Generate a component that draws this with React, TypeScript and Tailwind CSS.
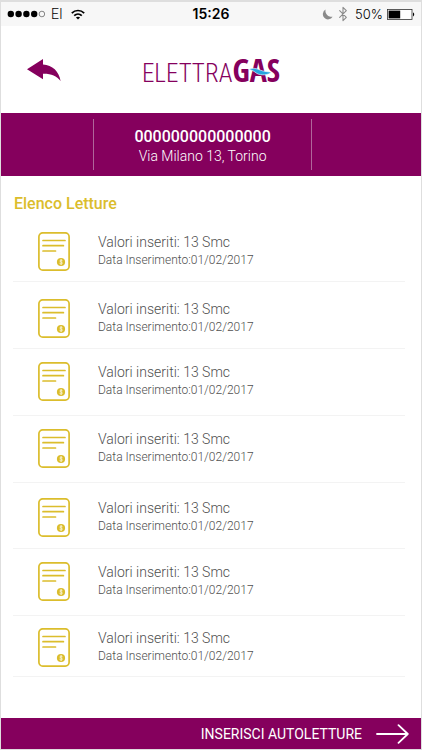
import { LuBluetooth } from "react-icons/lu";

type Spacing = "low" | "mid" | "high" | "last";

const spacingClass: Record<Spacing, string> = {
  low: "pt-[17px] pb-2.5",
  mid: "pt-[15px] pb-[11px]",
  high: "pt-[13px] pb-3.5",
  last: "pt-3 pb-[9px]",
};

const readings: { id: number; value: string; date: string; spacing: Spacing }[] = [
  { id: 1, value: "13 Smc", date: "01/02/2017", spacing: "low" },
  { id: 2, value: "13 Smc", date: "01/02/2017", spacing: "low" },
  { id: 3, value: "13 Smc", date: "01/02/2017", spacing: "high" },
  { id: 4, value: "13 Smc", date: "01/02/2017", spacing: "high" },
  { id: 5, value: "13 Smc", date: "01/02/2017", spacing: "mid" },
  { id: 6, value: "13 Smc", date: "01/02/2017", spacing: "high" },
  { id: 7, value: "13 Smc", date: "01/02/2017", spacing: "last" },
];

function StatusBar() {
  return (
    <div className="grid h-6 grid-cols-[1fr_auto_1fr] items-center bg-[#f7f7f7] px-1.5 text-sm text-black">
      <div className="flex items-center">
        <svg width="38" height="8" viewBox="0 0 38 8" aria-hidden="true">
          <circle cx="3.8" cy="4" r="3.2" />
          <circle cx="11.6" cy="4" r="3.2" />
          <circle cx="19.4" cy="4" r="3.2" />
          <circle cx="27.2" cy="4" r="3.2" />
          <circle cx="34.9" cy="4" r="2.8" fill="none" stroke="#555" strokeWidth="0.7" />
        </svg>
        <span className="ml-1.5 font-light">EI</span>
        <svg className="ml-2" width="14" height="11" viewBox="0 0 14 11" fill="none" stroke="#000" strokeWidth="1.7" aria-hidden="true">
          <path d="M0.8 4.1C4.3 0.6 9.7 0.6 13.2 4.1" />
          <path d="M3.2 6.6C5.4 4.5 8.6 4.5 10.8 6.6" />
          <path d="M7 10.6L4.9 8.5C6.1 7.4 7.9 7.4 9.1 8.5Z" fill="#000" stroke="none" />
        </svg>
      </div>
      <span className="font-['Inter',sans-serif] font-semibold">15:26</span>
      <div className="flex items-center justify-end">
        <svg width="11" height="11" viewBox="0 0 11 11" fill="#8a8a8a" aria-hidden="true">
          <path d="M3.6 0.6A5.2 5.2 0 1 0 10.6 7.7A5.9 5.9 0 0 1 3.6 0.6Z" />
        </svg>
        <LuBluetooth className="ml-0.5 h-4 w-4 text-[#8a8a8a]" strokeWidth={1.6} aria-hidden="true" />
        <span className="ml-1 font-['Inter',sans-serif] text-[13px] font-light">50%</span>
        <svg className="ml-1" width="28" height="11" viewBox="0 0 28 11" aria-hidden="true">
          <rect x="0.5" y="0.5" width="24.5" height="10" fill="#fff" stroke="#333" strokeWidth="0.8" />
          <rect x="1.6" y="1.6" width="11.6" height="7.8" />
          <path d="M26 3.6C27.6 4 27.6 7 26 7.4Z" />
        </svg>
      </div>
    </div>
  );
}

function Logo() {
  return (
    <div className="relative flex items-baseline leading-none text-[#85005d]" role="img" aria-label="Elettragas">
      <span className="font-['Roboto_Condensed','Roboto',sans-serif] text-[25px] font-light">ELETTRA</span>
      <span className="font-['Open_Sans_Condensed','Open_Sans',sans-serif] text-[32px] font-bold">GAS</span>
      <svg className="absolute right-2 bottom-2.5" width="24" height="9" viewBox="0 0 24 9" aria-hidden="true">
        <path d="M0.8 2.4C5 0.4 8.5 1.6 12 3C15.5 4.4 18.5 4.6 23.2 5.2C20.5 8.2 13 8.8 8.8 6.4C6.2 4.4 4.2 3 0.8 2.4Z" fill="#26a4e0" stroke="#fff" strokeWidth="0.6" />
      </svg>
    </div>
  );
}

function BillIcon() {
  return (
    <svg className="shrink-0" width="32" height="39" viewBox="0 0 32 39" fill="none" stroke="#dbbd2c" strokeLinecap="round" aria-hidden="true">
      <rect x="0.9" y="0.9" width="30.2" height="37.2" rx="3.8" strokeWidth="1.7" />
      <path d="M5 8.5H27M5 13.7H25.4M5 19H17.5" strokeWidth="1.7" />
      <circle cx="23" cy="30" r="4.1" fill="#dbbd2c" stroke="none" />
      <path d="M24.4 28.7C24 27.9 21.8 27.9 21.8 29C21.8 30.2 24.4 29.8 24.4 31.1C24.4 32.2 22 32.2 21.6 31.4M23.1 27.4V32.7" stroke="#fff" strokeWidth="0.7" />
    </svg>
  );
}

export default function App() {
  return (
    <div className="flex min-h-screen flex-col border border-t-2 border-[#dedede] bg-white font-['Roboto',sans-serif]">
      <StatusBar />
      <header className="grid h-[87px] grid-cols-[1fr_auto_1fr] items-center">
        <button type="button" aria-label="Indietro" className="ml-6 w-fit">
          <svg width="36" height="24" viewBox="0 0 36 24" fill="#85005d" aria-hidden="true">
            <path d="M2 11.3L18 1V6.4C27.5 7.2 34 13 35.6 23C31.5 17.8 26 15.6 18 15.8V21.2Z" />
          </svg>
        </button>
        <Logo />
      </header>

      <section className="grid grid-cols-[22fr_52fr_26fr] bg-[#85005d] py-1.5 text-center text-white">
        <div className="col-start-2 border-x border-[#b0669a] pt-2 pb-1">
          <p className="text-base leading-5 font-medium">000000000000000</p>
          <p className="text-sm leading-[19px] font-light">Via Milano 13, Torino</p>
        </div>
      </section>

      <main className="flex-1 pr-4 pl-3">
        <h1 className="pt-4 pl-px text-base leading-[23px] font-medium text-[#dbbd2c]">Elenco Letture</h1>
        <ul>
          {readings.map((r) => (
            <li key={r.id} className={`flex gap-7 border-b border-[#f3f3f3] pl-[25px] ${spacingClass[r.spacing]}`}>
              <BillIcon />
              <div className="h-[39px] font-light text-[#4f4f4f]">
                <p className="text-sm leading-5">Valori inseriti: {r.value}</p>
                <p className="text-xs leading-[17px]">Data Inserimento:{r.date}</p>
              </div>
            </li>
          ))}
        </ul>
      </main>

      <button type="button" className="flex h-[31px] items-center justify-end gap-3.5 bg-[#85005d] pr-3 text-sm text-white">
        INSERISCI AUTOLETTURE
        <svg width="33" height="20" viewBox="0 0 33 20" fill="none" stroke="#fff" strokeWidth="1.8" strokeLinecap="round" strokeLinejoin="round" aria-hidden="true">
          <path d="M1 10H31.5M22.5 1.2L31.8 10L22.5 18.8" />
        </svg>
      </button>
    </div>
  );
}
